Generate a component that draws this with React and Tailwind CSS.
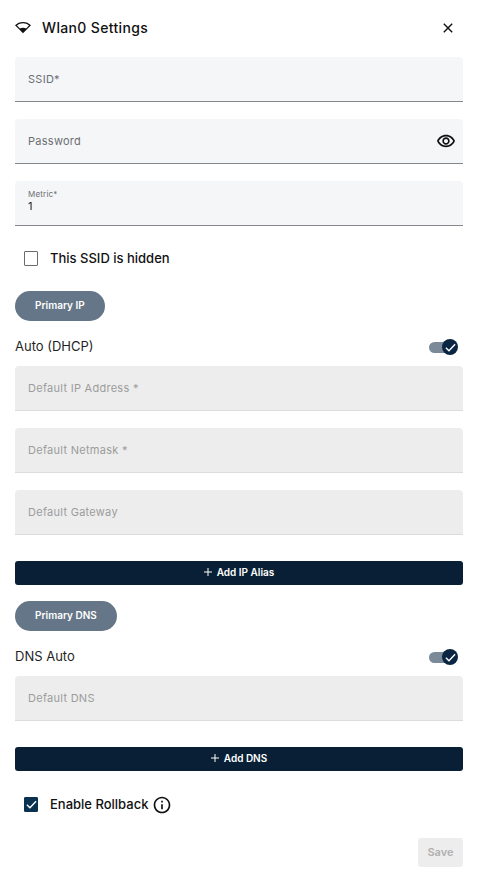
import { useState } from "react";

const WifiIcon = () => (
  <svg viewBox="0 0 24 18" className="w-4 h-3" fill="#111" aria-hidden="true">
    <path d="M12 0C7.2 0 3.2 1.8 0 5L12 17 24 5C20.8 1.8 16.8 0 12 0zM3 5.1C5.5 3.1 8.6 2 12 2s6.500 1.100 9 3.100L16.600 9.800C15.300 9 13.800 8.500 12 8.500S8.700 9 7.400 9.800z" />
  </svg>
);

const CloseIcon = () => (
  <svg viewBox="0 0 10 10" className="w-[10px] h-[10px]" aria-hidden="true">
    <path d="M0.8 0.8L9.2 9.2M9.2 0.8L0.8 9.2" stroke="#111" strokeWidth="1.4" />
  </svg>
);

const EyeIcon = () => (
  <svg viewBox="1 3 22 17" className="w-[18px] h-[14px]" fill="#111" aria-hidden="true">
    <path d="M12 6c3.79 0 7.17 2.13 8.82 5.5C19.17 14.87 15.79 17 12 17s-7.17-2.13-8.82-5.5C4.83 8.13 8.21 6 12 6m0-2C7 4 2.73 7.11 1 11.5 2.73 15.89 7 19 12 19s9.27-3.11 11-7.5C21.27 7.11 17 4 12 4zm0 5c1.38 0 2.5 1.12 2.5 2.5S13.38 14 12 14s-2.5-1.12-2.5-2.5S10.62 9 12 9m0-2c-2.48 0-4.5 2.02-4.5 4.5S9.52 16 12 16s4.5-2.02 4.5-4.5S14.48 7 12 7z" />
  </svg>
);

const InfoIcon = () => (
  <svg viewBox="0 0 24 24" className="w-5 h-5" fill="#111" aria-hidden="true">
    <path d="M11 7h2v2h-2zm0 4h2v6h-2zm1-9C6.48 2 2 6.48 2 12s4.48 10 10 10 10-4.48 10-10S17.52 2 12 2zm0 18c-4.41 0-8-3.59-8-8s3.59-8 8-8 8 3.59 8 8-3.59 8-8 8z" />
  </svg>
);

const PlusIcon = () => (
  <svg viewBox="0 0 8 8" className="w-2 h-2" aria-hidden="true">
    <path d="M4 0V8M0 4H8" stroke="#fff" strokeWidth="1" />
  </svg>
);

const Check = ({ className }) => (
  <svg viewBox="0 0 12 12" className={className} aria-hidden="true">
    <path d="M1 6.4L4.3 9.6L11 2.4" fill="none" stroke="#fff" strokeWidth="1.5" />
  </svg>
);

const Field = ({ id, label, type = "text", disabled, initial = "", children }) => {
  const [value, setValue] = useState(initial);
  return (
    <div
      className={
        disabled
          ? "flex items-center h-[45px] px-[13px] rounded-t-[4px] border-b border-[#dcdcdc] bg-[#ededed]"
          : "flex items-center h-[45px] pl-[13px] pr-2 rounded-t-[4px] border-b border-[#85878a] bg-[#f5f6f8]"
      }
    >
      <div className={value ? "flex flex-col flex-1 pb-[3px]" : "grid flex-1 items-center"}>
        <label
          htmlFor={id}
          className={
            value
              ? "text-[8px] leading-[10px] tracking-wide text-[#6b6e72]"
              : disabled
                ? "col-start-1 row-start-1 text-[11px] leading-4 tracking-wide text-[#9c9c9c] pointer-events-none"
                : "col-start-1 row-start-1 text-[11px] leading-4 tracking-wide text-[#6b6e72] pointer-events-none"
          }
        >
          {label}
        </label>
        <input
          id={id}
          type={type}
          value={value}
          disabled={disabled}
          onChange={(e) => setValue(e.target.value)}
          className="col-start-1 row-start-1 w-full h-4 bg-transparent text-[11px] text-[#1f1f1f] outline-none"
        />
      </div>
      {children}
    </div>
  );
};

const Chip = ({ children }) => (
  <span className="self-start flex items-center h-[30px] px-5 pb-px rounded-full bg-[#647687] text-[10px] font-semibold text-white">
    {children}
  </span>
);

const Toggle = ({ id, label }) => {
  const [on, setOn] = useState(true);
  return (
    <div className="flex items-center justify-between h-5 pr-[5px]">
      <label htmlFor={id} className="text-[13px] text-[#1f1f1f]">
        {label}
      </label>
      <span className="grid items-center w-[29px]">
        <input
          id={id}
          type="checkbox"
          role="switch"
          checked={on}
          onChange={() => setOn(!on)}
          className="col-start-1 row-start-1 appearance-none w-[27px] h-[11px] rounded-full bg-[#7b8a99]"
        />
        <span
          className={
            on
              ? "col-start-1 row-start-1 justify-self-end flex items-center justify-center w-4 h-4 rounded-full bg-[#0b2642] pointer-events-none"
              : "col-start-1 row-start-1 justify-self-start w-4 h-4 rounded-full bg-[#647687] pointer-events-none"
          }
        >
          {on && <Check className="w-[11px] h-[11px]" />}
        </span>
      </span>
    </div>
  );
};

const Checkbox = ({ id, label, initial = false }) => {
  const [checked, setChecked] = useState(initial);
  return (
    <div className="flex items-center gap-3">
      <span className="grid place-items-center">
        <input
          id={id}
          type="checkbox"
          checked={checked}
          onChange={() => setChecked(!checked)}
          className="col-start-1 row-start-1 appearance-none w-[14px] h-[15px] rounded-[1px] border border-[#6b6b6b] checked:border-[#0b3150] checked:bg-[#0b3150]"
        />
        {checked && (
          <Check className="col-start-1 row-start-1 w-[11px] h-[11px] pointer-events-none" />
        )}
      </span>
      <label htmlFor={id} className="text-[13px] font-medium text-[#111]">
        {label}
      </label>
    </div>
  );
};

const AddButton = ({ children }) => (
  <button
    type="button"
    className="flex items-center justify-center gap-[5px] w-full h-6 pb-[2px] rounded-[3px] bg-[#081f35] text-[10px] font-semibold text-white"
  >
    <PlusIcon />
    {children}
  </button>
);

const App = () => (
  <form
    className="flex flex-col min-h-screen px-[15px] pb-4 bg-white font-['Inter',sans-serif]"
    onSubmit={(e) => e.preventDefault()}
  >
    <header className="flex items-center justify-between h-[57px] pr-[10px] pb-[2px]">
      <h1 className="flex items-center gap-[11px] text-sm font-medium tracking-wide text-[#111]">
        <WifiIcon />
        Wlan0 Settings
      </h1>
      <button type="button" aria-label="Close">
        <CloseIcon />
      </button>
    </header>

    <div className="flex flex-col gap-[17px]">
      <Field id="ssid" label="SSID*" />
      <Field id="password" label="Password" type="password">
        <button type="button" aria-label="Show password">
          <EyeIcon />
        </button>
      </Field>
      <Field id="metric" label="Metric*" initial="1" />
    </div>

    <div className="flex items-center h-[65px] pl-[9px]">
      <Checkbox id="hidden" label="This SSID is hidden" />
    </div>

    <section className="flex flex-col">
      <Chip>Primary IP</Chip>
      <div className="pt-4 pb-[9px]">
        <Toggle id="dhcp" label="Auto (DHCP)" />
      </div>
      <div className="flex flex-col gap-[17px] pb-[26px]">
        <Field id="ip" label="Default IP Address *" disabled />
        <Field id="netmask" label="Default Netmask *" disabled />
        <Field id="gateway" label="Default Gateway" disabled />
      </div>
      <AddButton>Add IP Alias</AddButton>
    </section>

    <section className="flex flex-col pt-4">
      <Chip>Primary DNS</Chip>
      <div className="pt-4 pb-[9px]">
        <Toggle id="dns-auto" label="DNS Auto" />
      </div>
      <div className="pb-[26px]">
        <Field id="dns" label="Default DNS" disabled />
      </div>
      <AddButton>Add DNS</AddButton>
    </section>

    <div className="flex items-center gap-1 h-[67px] pl-[9px]">
      <Checkbox id="rollback" label="Enable Rollback" initial />
      <InfoIcon />
    </div>

    <button
      type="submit"
      disabled
      className="self-end h-[29px] w-[45px] rounded-[3px] bg-[#ededed] text-[11px] font-semibold text-[#b0b0b0]"
    >
      Save
    </button>
  </form>
);

export default App;
